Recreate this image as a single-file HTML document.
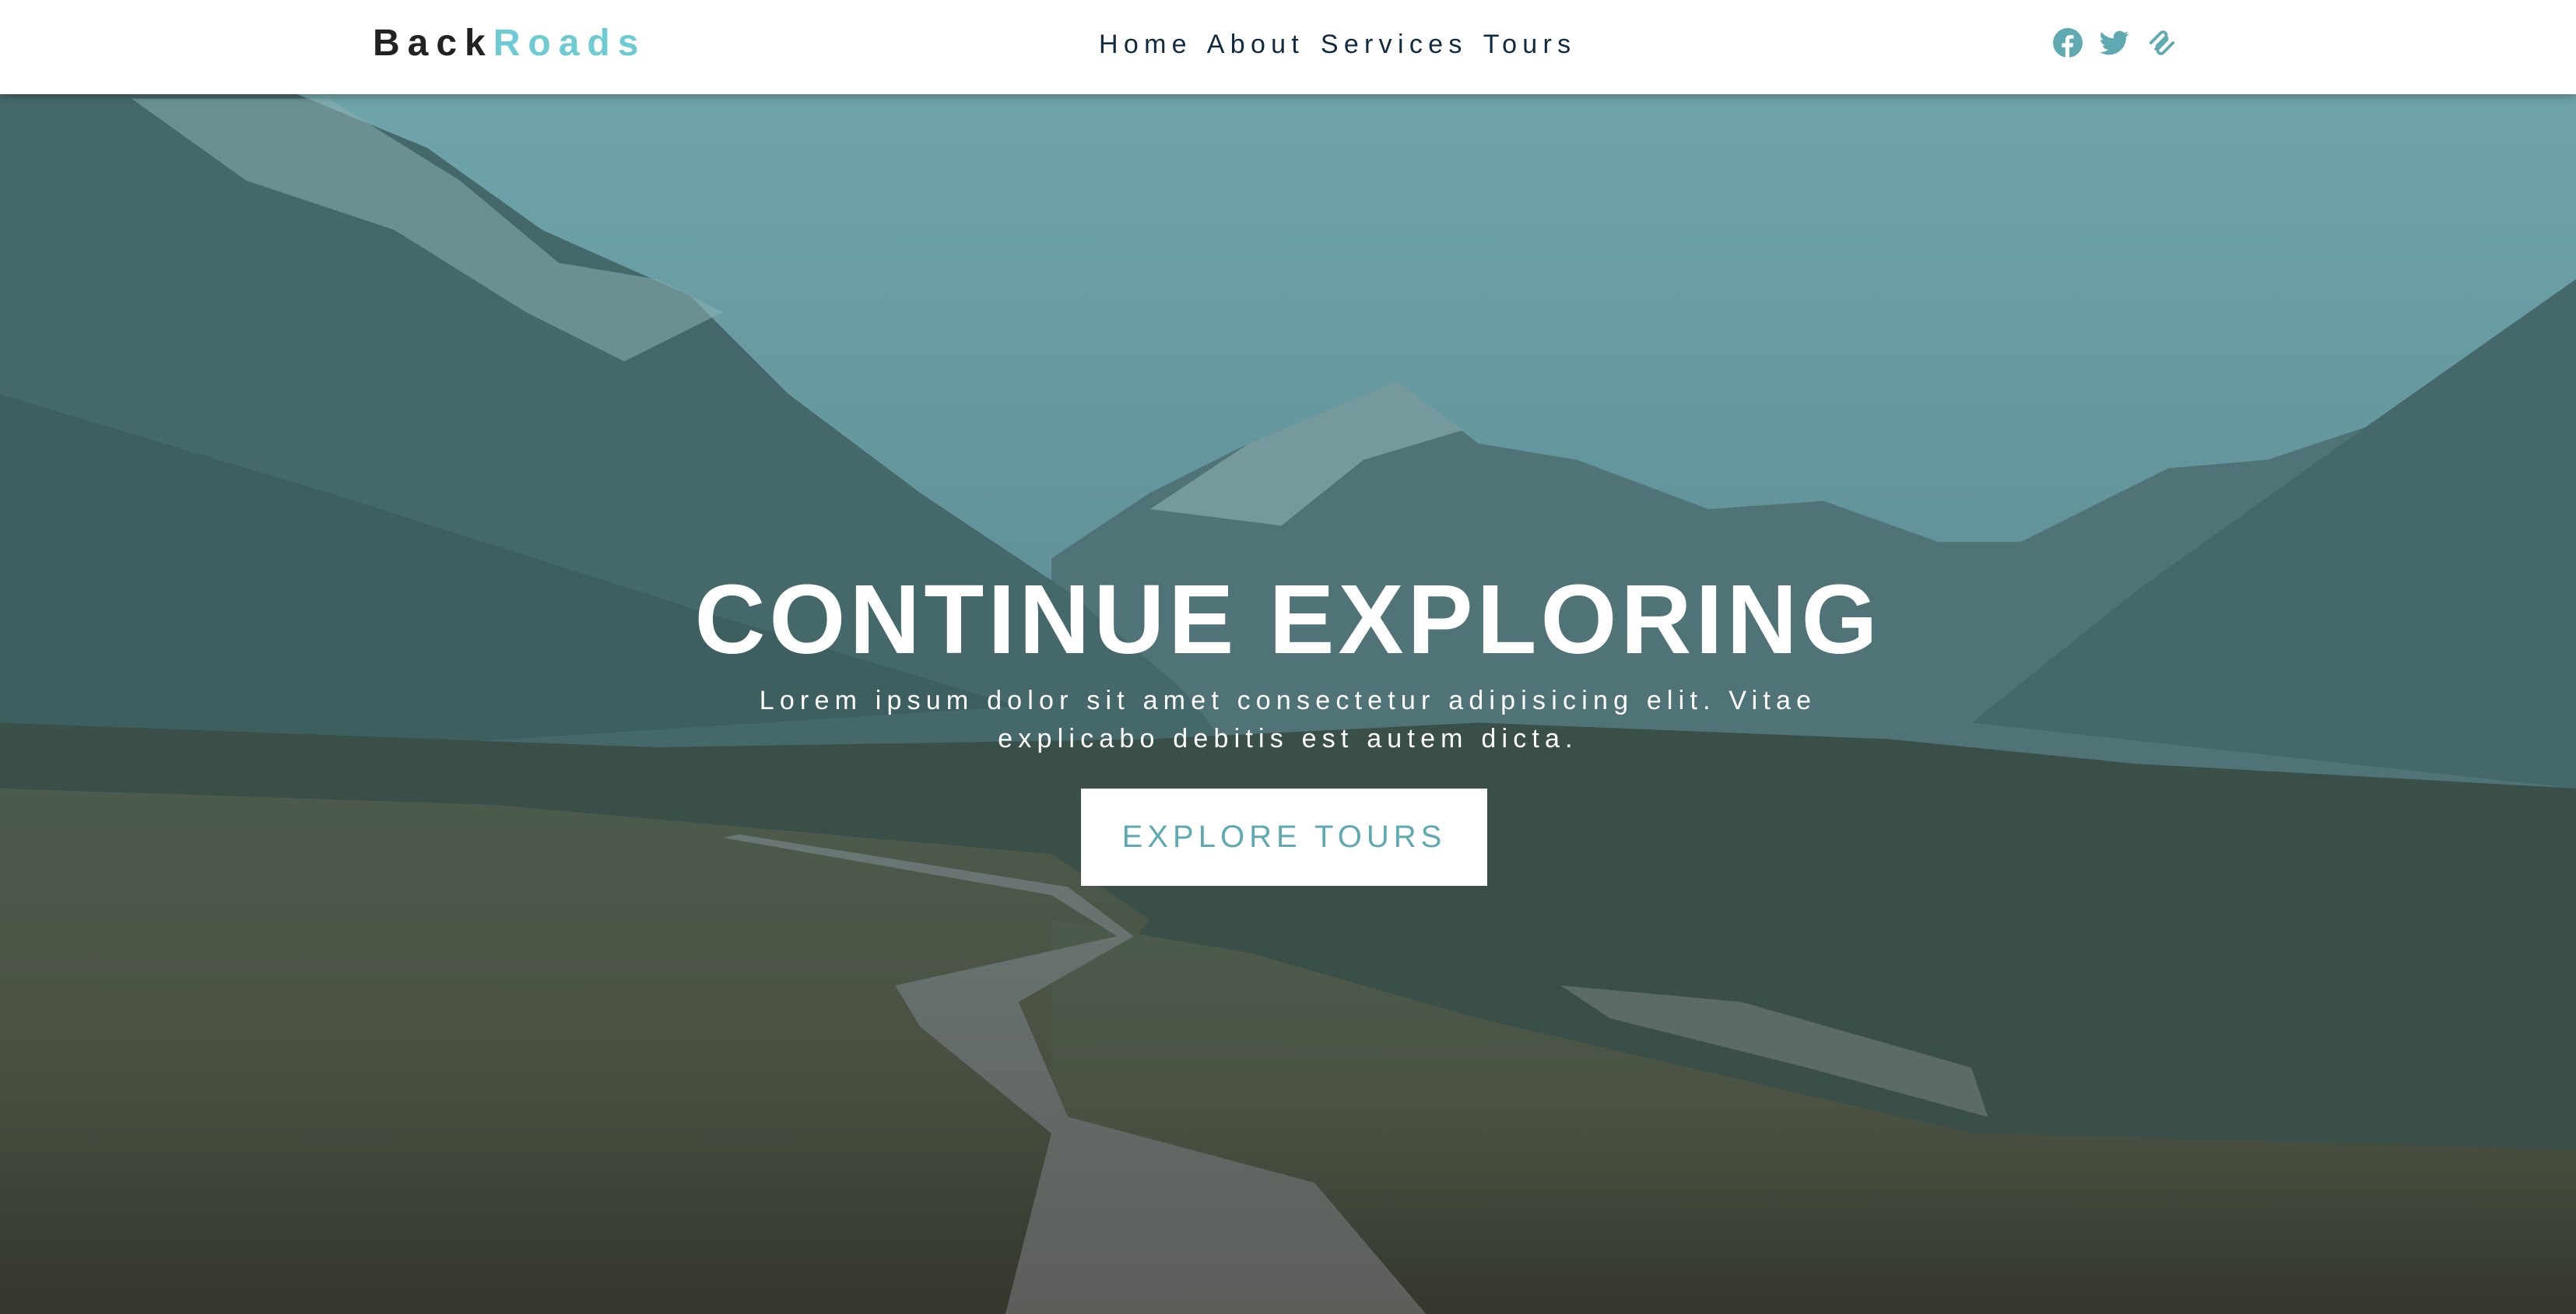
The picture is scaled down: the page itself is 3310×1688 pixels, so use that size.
<!DOCTYPE html>
<html><head><meta charset="utf-8"><style>
html,body{margin:0;padding:0;width:3310px;height:1688px;overflow:hidden;font-family:"Liberation Sans",sans-serif;}
.bg{position:absolute;left:0;top:0;width:3310px;height:1688px;}
nav{position:absolute;left:0;top:0;width:3310px;height:121px;background:#fff;box-shadow:0 4px 10px rgba(0,0,0,.25);}
.logo{position:absolute;left:479px;top:28px;font-size:48px;font-weight:700;letter-spacing:10px;color:#222;}
.logo span{color:#6ccbd3;}
.links{position:absolute;left:1412px;top:38px;font-size:34px;letter-spacing:7.3px;color:#102a42;word-spacing:4px;}
.icons{position:absolute;left:2638px;top:36px;}
.icons svg{margin-right:17px;vertical-align:top;}
h1{position:absolute;left:0;width:3310px;top:716px;margin:0;text-align:center;color:#fff;font-size:126px;font-weight:700;letter-spacing:5px;line-height:160px;}
p{position:absolute;left:895px;width:1520px;top:876px;margin:0;text-align:center;color:#fff;font-size:34px;letter-spacing:7.2px;line-height:49px;}
.btn{position:absolute;left:1389px;top:1013px;width:522px;height:125px;background:#fff;color:#5fa9b3;font-size:40px;letter-spacing:6px;text-align:center;line-height:125px;}
</style></head><body>
<svg class="bg" viewBox="0 0 1568 800" preserveAspectRatio="none">
<defs>
<linearGradient id="sky" x1="0" y1="0" x2="0" y2="1"><stop offset="0" stop-color="#72a8af"/><stop offset=".5" stop-color="#5f8f97"/><stop offset="1" stop-color="#4d7478"/></linearGradient>
<linearGradient id="gr" x1="0" y1="0" x2="0" y2="1"><stop offset="0" stop-color="#4c5b4d"/><stop offset=".5" stop-color="#4a5142"/><stop offset="1" stop-color="#33372d"/></linearGradient>
<linearGradient id="pt" x1="0" y1="0" x2="0" y2="1"><stop offset="0" stop-color="#6b7775"/><stop offset="1" stop-color="#5c5e5a"/></linearGradient>
</defs>
<rect width="1568" height="800" fill="url(#sky)"/>
<polygon points="640,340 700,300 760,270 850,232 900,270 960,280 1040,310 1110,305 1180,330 1230,330 1320,285 1380,280 1440,260 1568,170 1568,520 640,520" fill="#4f7377"/>
<polygon points="700,310 760,270 850,232 890,262 830,280 780,320" fill="#8fb3b7" opacity=".6"/>
<polygon points="0,57 180,57 260,90 330,140 420,180 480,240 560,300 650,360 720,420 760,470 0,470" fill="#45686a"/>
<polygon points="80,60 200,60 280,110 340,160 400,170 440,190 380,220 320,190 240,140 150,110" fill="#8db0b2" opacity=".55"/>
<polygon points="0,240 200,300 420,370 620,430 0,470" fill="#3c5d5d" opacity=".8"/>
<polygon points="1568,170 1568,480 1200,440 1300,360 1440,260" fill="#45686a"/>
<polygon points="0,440 400,455 700,450 900,440 1150,450 1300,465 1568,480 1568,800 0,800" fill="#3a4f47"/>
<polygon points="0,480 300,490 640,520 700,560 650,620 640,800 0,800" fill="url(#gr)"/>
<polygon points="640,560 760,580 900,620 1200,690 1568,700 1568,800 640,800" fill="url(#gr)"/>
<polygon points="950,600 1060,610 1200,650 1210,680 1100,650 980,620" fill="#6b7775" opacity=".7"/>
<polygon points="440,510 640,545 680,570 545,600 560,625 640,690 612,800 868,800 800,720 650,680 620,610 690,570 650,540 450,508" fill="url(#pt)"/>
</svg>
<nav>
<div class="logo">Back<span>Roads</span></div>
<div class="links">Home About Services Tours</div>
<div class="icons">
<svg width="38" height="38" viewBox="0 0 24 24"><circle cx="12" cy="12" r="12" fill="#5fa9b3"/><path d="M13.3 24v-8.5h2.8l.4-3.3h-3.2v-2c0-1 .3-1.6 1.7-1.6h1.7V5.7c-.3 0-1.3-.1-2.5-.1-2.5 0-4.2 1.5-4.2 4.3v2.4H7.2v3.3H10V24z" fill="#fff"/></svg>
<svg width="40" height="38" viewBox="0 0 24 24"><path d="M23.6 4.6c-.9.4-1.8.6-2.8.8 1-.6 1.8-1.6 2.1-2.7-.9.6-2 1-3.1 1.2a4.9 4.9 0 0 0-8.4 4.5C7.4 8.2 3.8 6.2 1.4 3.3c-1.3 2.3-.6 5.1 1.5 6.5-.8 0-1.5-.2-2.200-.6 0 2.400 1.700 4.400 3.900 4.800-.7.2-1.500.2-2.200.1.6 2 2.400 3.400 4.600 3.400A9.9 9.9 0 0 1 0 19.5 14 14 0 0 0 7.5 21.7c9.1 0 14.2-7.7 13.9-14.6 1-.7 1.8-1.5 2.2-2.5z" fill="#5fa9b3"/></svg>
<svg width="38" height="38" viewBox="0 0 24 24" fill="none" stroke="#5fa9b3" stroke-width="2.4" stroke-linecap="round"><path d="M3 12l8-8a2.6 2.6 0 0 1 3.7 3.7L8 14.5"/><path d="M7 17L16 8"/><path d="M21 12l-8 8a2.6 2.6 0 0 1-3.7-3.7L16 9.5"/></svg>
</div>
</nav>
<h1>CONTINUE EXPLORING</h1>
<p>Lorem ipsum dolor sit amet consectetur adipisicing elit. Vitae explicabo debitis est autem dicta.</p>
<div class="btn">EXPLORE TOURS</div>
</body></html>
